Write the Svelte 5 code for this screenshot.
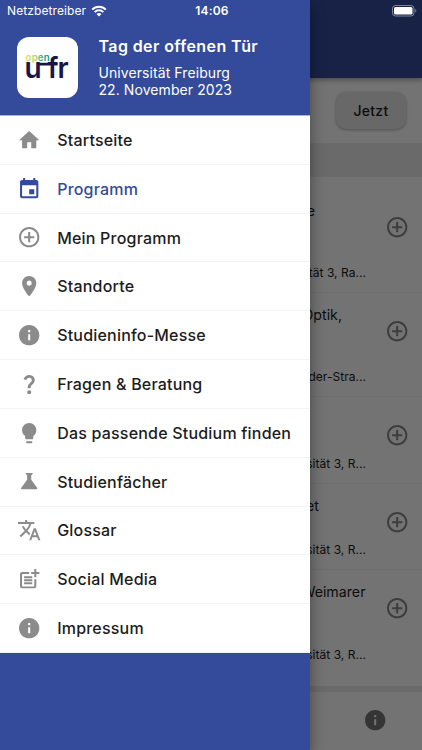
<script>
	const icons = {
		home: 'M10 20v-6h4v6h5v-8h3L12 3 2 12h3v8z',
		event:
			'M17 12h-5v5h5v-5zM16 1v2H8V1H6v2H5c-1.11 0-1.99.9-1.99 2L3 19c0 1.1.89 2 2 2h14c1.1 0 2-.9 2-2V5c0-1.1-.9-2-2-2h-1V1h-2zm3 18H5V8h14v11z',
		add: 'M13 7h-2v4H7v2h4v4h2v-4h4v-2h-4V7zm-1-5C6.48 2 2 6.48 2 12s4.48 10 10 10 10-4.48 10-10S17.52 2 12 2zm0 18c-4.41 0-8-3.59-8-8s3.59-8 8-8 8 3.59 8 8-3.59 8-8 8z',
		place:
			'M12 2C8.13 2 5 5.13 5 9c0 5.25 7 13 7 13s7-7.75 7-13c0-3.87-3.13-7-7-7zm0 9.5c-1.38 0-2.5-1.12-2.5-2.5s1.12-2.5 2.5-2.5 2.5 1.12 2.5 2.5-1.12 2.5-2.5 2.5z',
		info: 'M12 2C6.48 2 2 6.48 2 12s4.48 10 10 10 10-4.48 10-10S17.52 2 12 2zm1 15h-2v-6h2v6zm0-8h-2V7h2v2z',
		question:
			'M11.07 12.85c.77-1.39 2.25-2.21 3.11-3.44.91-1.29.4-3.7-2.18-3.7-1.69 0-2.52 1.28-2.87 2.34L6.54 6.96C7.25 4.83 9.18 3 11.99 3c2.35 0 3.96 1.07 4.78 2.41.7 1.15 1.11 3.3.03 4.9-1.2 1.77-2.35 2.31-2.97 3.45-.25.46-.35.76-.35 2.24h-2.89c-.01-.78-.13-2.05.48-3.15zM14 20c0 1.1-.9 2-2 2s-2-.9-2-2 .9-2 2-2 2 .9 2 2z',
		bulb: 'M9 21c0 .5.4 1 1 1h4c.6 0 1-.5 1-1v-1H9v1zm3-19C8.14 2 5 5.14 5 9c0 2.38 1.19 4.47 3 5.74V17c0 .5.4 1 1 1h6c.6 0 1-.5 1-1v-2.26c1.81-1.27 3-3.36 3-5.74 0-3.86-3.14-7-7-7z',
		flask:
			'M19.8 18.4L14 10.67V6.5l1.35-1.69c.26-.33.03-.81-.39-.81H9.04c-.42 0-.65.48-.39.81L10 6.5v4.17L4.2 18.4c-.49.66-.02 1.6.8 1.6h14c.82 0 1.29-.94.8-1.6z',
		translate:
			'M12.87 15.07l-2.54-2.51.03-.03c1.74-1.94 2.98-4.17 3.71-6.53H17V4h-7V2H8v2H1v1.99h11.17C11.5 7.92 10.44 9.75 9 11.35 8.07 10.32 7.3 9.19 6.69 8h-2c.73 1.63 1.73 3.17 2.98 4.56l-5.09 5.02L4 19l5-5 3.11 3.11.76-2.04zM18.5 10h-2L12 22h2l1.12-3h4.75L21 22h2l-4.5-12zm-2.62 7l1.62-4.33L19.12 17h-3.24z',
		post: 'M17 19.22H5V7h7V5H5c-1.1 0-2 .9-2 2v12c0 1.1.9 2 2 2h12c1.1 0 2-.9 2-2v-7h-2v7.22zM19 2h-2v3h-3v2h3v3h2V7h3V5h-3V2zM7 9h8v2H7zM7 12v2h8v-2H7zM7 15h8v2H7z'
	};

	const menu = [
		{ label: 'Startseite', icon: 'home' },
		{ label: 'Programm', icon: 'event' },
		{ label: 'Mein Programm', icon: 'add' },
		{ label: 'Standorte', icon: 'place' },
		{ label: 'Studieninfo-Messe', icon: 'info' },
		{ label: 'Fragen & Beratung', icon: 'question' },
		{ label: 'Das passende Studium finden', icon: 'bulb' },
		{ label: 'Studienfächer', icon: 'flask' },
		{ label: 'Glossar', icon: 'translate' },
		{ label: 'Social Media', icon: 'post' },
		{ label: 'Impressum', icon: 'info' }
	];

	// titleWidth: where the first title line ends, in px
	const events = [
		{ title: 'e', titleWidth: 315, place: 'Universität 3, Ra...', lines: 2 },
		{ title: 'Optik,', titleWidth: 342, place: 'der-Stra...', lines: 2 },
		{ title: '', titleWidth: 300, place: 'Universität 3, R...', lines: 1 },
		{ title: 'et', titleWidth: 319, place: 'Universität 3, R...', lines: 1 },
		{ title: 'Weimarer', titleWidth: 365.5, place: 'Universität 3, R...', lines: 2 }
	];

	let active = $state('Programm');
</script>

{#snippet icon(name)}
	<svg class="icon" viewBox="0 0 24 24"><path d={icons[name]} /></svg>
{/snippet}

<div class="app">
	<div class="page">
		<header class="app-bar"></header>
		<div class="toolbar">
			<button class="now">Jetzt</button>
		</div>
		<div class="section"></div>
		<div class="events">
			{#each events as event}
				<div class="event" class:tall={event.lines === 2}>
					<div class="event-text">
						<div class="event-title" style="width: {event.titleWidth}px">{event.title}</div>
						<div class="event-place">{event.place}</div>
					</div>
					<div class="event-add">{@render icon('add')}</div>
				</div>
			{/each}
		</div>
		<nav class="tabs">{@render icon('info')}</nav>
	</div>

	<div class="scrim"></div>

	<aside class="drawer">
		<div class="drawer-head">
			<svg class="logo" viewBox="0 0 61 61">
				<defs>
					<linearGradient id="openGradient" x1="0" x2="1">
						<stop offset="0" stop-color="#e3df62" />
						<stop offset="0.45" stop-color="#a5cf75" />
						<stop offset="0.7" stop-color="#2fa083" />
						<stop offset="1" stop-color="#178f83" />
					</linearGradient>
				</defs>
				<rect width="61" height="61" rx="12" fill="#fff" />
				<text class="logo-open" x="8.6" y="24" textLength="24" fill="url(#openGradient)">open</text>
				<text class="logo-name" x="7.4" y="41.4">u</text>
				<rect x="20.5" y="25.8" width="20" height="2.7" fill="#1b1446" />
				<text class="logo-name" x="30.4" y="41.4">f</text>
				<text class="logo-name" x="40.6" y="41.4">r</text>
			</svg>
			<div class="head-text">
				<h1>Tag der offenen Tür</h1>
				<p>Universität Freiburg</p>
				<p>22. November 2023</p>
			</div>
		</div>
		<nav class="menu">
			{#each menu as item}
				<button
					class="menu-item"
					class:active={item.label === active}
					onclick={() => (active = item.label)}
				>
					{@render icon(item.icon)}
					<span>{item.label}</span>
				</button>
			{/each}
		</nav>
	</aside>

	<div class="status">
		<div class="carrier">
			<span>Netzbetreiber</span>
			<svg class="wifi" viewBox="0 0 16 12">
				<path d="M1.2 4.6a9.6 9.6 0 0 1 13.6 0M3.7 7.1a6.1 6.1 0 0 1 8.6 0" />
				<path class="wifi-dot" d="M8 11.6l-2.5-2.5a3.6 3.6 0 0 1 5 0z" />
			</svg>
		</div>
		<span class="time">14:06</span>
		<svg class="battery" viewBox="0 0 25 12">
			<rect x="0.5" y="0.5" width="21.5" height="10.5" rx="3" fill="none" stroke="#fff" stroke-opacity="0.45" />
			<rect x="2" y="2" width="18.5" height="7.5" rx="1.6" fill="#fff" />
			<path d="M23.3 4v3.6c1.4-.6 1.4-3 0-3.6z" fill="#fff" fill-opacity="0.5" />
		</svg>
	</div>
</div>

<style>
	:global(body) {
		margin: 0;
	}

	.app {
		--blue: #344a9a;
		position: relative;
		width: 422px;
		height: 750px;
		overflow: hidden;
		font-family: Inter, 'Liberation Sans', sans-serif;
		color: #1c1c1c;
	}

	button {
		border: 0;
		font: inherit;
		color: inherit;
	}

	.icon {
		display: block;
		flex: none;
		width: 24.4px;
		height: 24.4px;
		fill: currentColor;
	}

	/* Page behind the drawer */
	.page {
		display: flex;
		flex-direction: column;
		height: 100%;
		background: #fafafa;
	}

	.app-bar {
		position: relative;
		flex: none;
		height: 78px;
		background: var(--blue);
		box-shadow: 0 2px 5px rgba(0, 0, 0, 0.35);
	}

	.toolbar {
		display: flex;
		flex: none;
		justify-content: flex-end;
		align-items: center;
		box-sizing: border-box;
		height: 65px;
		padding-right: 16px;
	}

	.now {
		width: 70px;
		height: 37px;
		border-radius: 10px;
		background: #e2e2e2;
		font-size: 14px;
		font-weight: 500;
		letter-spacing: 0.3px;
		box-shadow: 0 1px 3px rgba(0, 0, 0, 0.3);
	}

	.section {
		flex: none;
		height: 34px;
		background: #e6e6e6;
	}

	.events {
		flex: none;
		padding: 12px 0;
		border-bottom: 6px solid #e6e6e6;
	}

	.event {
		display: flex;
		box-sizing: border-box;
		height: 86.6px;
		border-bottom: 1px solid #eeeeee;
	}

	.event:last-child {
		border-bottom: 0;
	}

	.tall {
		height: 104px;
	}

	.event-text {
		display: flex;
		flex-direction: column;
		justify-content: space-between;
		width: 366px;
		padding: 13px 0 11px;
		text-align: right;
		white-space: nowrap;
	}

	.event-title {
		height: 18px;
		font-size: 14.2px;
		line-height: 18px;
		letter-spacing: 0;
	}

	.event-place {
		font-size: 12px;
		line-height: 16px;
		letter-spacing: 0.04px;
	}

	.event-add {
		padding: 26px 0 0 19px;
		color: #858585;
	}

	.tabs {
		display: flex;
		flex: 1;
		justify-content: flex-end;
		align-items: center;
		padding: 0 35px 2px 0;
		color: #757575;
	}

	.scrim {
		position: absolute;
		inset: 0;
		background: rgba(0, 0, 0, 0.54);
	}

	/* Drawer */
	.drawer {
		position: absolute;
		inset: 0 auto 0 0;
		width: 309.6px;
		background: var(--blue);
		box-shadow: 0 6px 14px rgba(0, 0, 0, 0.4);
	}

	.drawer-head {
		display: flex;
		box-sizing: border-box;
		height: 116px;
		padding: 37px 0 0 16.5px;
		border-bottom: 1px solid #aab4e4;
		color: #fff;
	}

	.logo {
		flex: none;
		width: 61px;
		height: 61px;
	}

	.logo-open {
		font: 600 9.6px Inter, sans-serif;
	}

	.logo-name {
		font: 600 28px Inter, sans-serif;
		fill: #1b1446;
	}

	.head-text {
		padding-left: 21px;
	}

	h1 {
		margin: 0 0 8px;
		font-size: 16px;
		line-height: 19px;
		font-weight: 600;
		letter-spacing: 0.4px;
	}

	p {
		margin: 0;
		font-size: 14px;
		line-height: 17.4px;
		letter-spacing: 0.08px;
	}

	.menu {
		display: flex;
		flex-direction: column;
		height: 537px;
		background: #fff;
	}

	.menu-item {
		display: flex;
		flex: 1;
		align-items: center;
		gap: 16px;
		padding: 0 0 0 16.8px;
		border-bottom: 1px solid #f3f3f3;
		background: none;
		font-size: 16px;
		font-weight: 500;
		letter-spacing: 0.2px;
		white-space: nowrap;
	}

	.menu-item .icon {
		color: #8b8b8b;
	}

	.menu-item.active,
	.menu-item.active .icon {
		color: var(--blue);
	}

	/* Status bar lies over both page and drawer */
	.status {
		position: absolute;
		inset: 0 0 auto 0;
		display: grid;
		grid-template-columns: 1fr auto 1fr;
		align-items: center;
		box-sizing: border-box;
		height: 21px;
		padding: 0 5px 0 7px;
		color: #fff;
		font-size: 12px;
	}

	.carrier {
		display: flex;
		align-items: center;
		gap: 5px;
		letter-spacing: 0.1px;
	}

	.wifi {
		width: 16px;
		height: 12px;
		fill: none;
		stroke: #fff;
		stroke-width: 2;
	}

	.wifi .wifi-dot {
		fill: #fff;
		stroke: none;
	}

	.time {
		font-weight: 600;
		letter-spacing: 0.2px;
	}

	.battery {
		justify-self: end;
		width: 25px;
		height: 12px;
	}
</style>
